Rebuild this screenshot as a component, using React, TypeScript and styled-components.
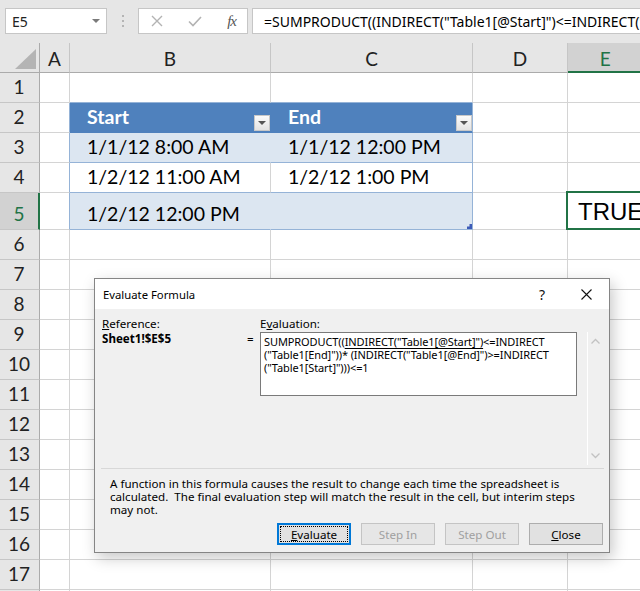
import React from 'react';
import styled, { createGlobalStyle } from 'styled-components';

const GRID = '#d4d4d4';
const TLINE = '#95b3d7';
const BLUE = '#4f81bd';
const BAND = '#dce6f1';
const GREEN = '#217346';

const GlobalStyle = createGlobalStyle`
  html, body {
    margin: 0;
    padding: 0;
    background: #fff;
    overflow: hidden;
  }
`;

const Page = styled.div`
  position: relative;
  width: 640px;
  height: 591px;
  overflow: hidden;
  background: #fff;
`;

/* ---------- formula bar ---------- */

const FormulaBar = styled.div`
  display: flex;
  align-items: flex-start;
  height: 43px;
  box-sizing: border-box;
  padding: 8px 0 0 5px;
  background: #e6e6e6;
  font-family: "Noto Sans", sans-serif;
`;

const Field = styled.div`
  box-sizing: border-box;
  height: 26px;
  background: #fff;
  border: 1px solid #c6c6c6;
  display: flex;
  align-items: center;
`;

const NameBox = styled(Field)`
  width: 102px;
  padding: 0 6px 0 6px;
  justify-content: space-between;
  font-size: 14px;
  color: #222;
`;

const Caret = styled.span`
  width: 0;
  height: 0;
  border-left: 4px solid transparent;
  border-right: 4px solid transparent;
  border-top: 4px solid #7a7a7a;
`;

const Grip = styled.div`
  width: 31px;
  height: 26px;
  display: flex;
  flex-direction: column;
  align-items: center;
  justify-content: center;
  gap: 3px;

  span {
    width: 2px;
    height: 2px;
    background: #b4b4b4;
  }
`;

const FxGroup = styled(Field)`
  width: 110px;
  padding: 0 11px 0 12px;
  justify-content: space-between;
`;

const Fx = styled.span`
  font-family: "Liberation Serif", serif;
  font-style: italic;
  font-size: 15px;
  color: #555;
  letter-spacing: -1px;
`;

const FormulaInput = styled(Field)`
  flex: 1;
  margin-left: 4px;
  margin-right: -2px;
  padding-left: 11px;
  overflow: hidden;
  white-space: nowrap;
  font-size: 14px;
  color: #000;
`;

/* ---------- sheet ---------- */

const Sheet = styled.div`
  display: grid;
  grid-template-columns: 40px 30px 201px 202px 95px 1fr;
  grid-template-rows: 30px 30px 30px 30px 30px 37px;
  grid-auto-rows: 30px;
  font-family: Lato, "Noto Sans", sans-serif;
`;

const Corner = styled.div`
  box-sizing: border-box;
  background: #e6e6e6;
  border-right: 1px solid #ababab;
  border-bottom: 1px solid #ababab;
  display: flex;
  align-items: flex-end;
  justify-content: flex-end;
  padding: 0 3px 3px 0;

  span {
    width: 21px;
    height: 20px;
    background: #b4b4b4;
    clip-path: polygon(100% 0, 100% 100%, 0 100%);
  }
`;

const ColHead = styled.div<{ $active?: boolean }>`
  box-sizing: border-box;
  background: ${p => (p.$active ? '#d2d2d2' : '#e6e6e6')};
  border-right: 1px solid #c6c6c6;
  border-bottom: ${p => (p.$active ? `2px solid ${GREEN}` : '1px solid #ababab')};
  display: flex;
  align-items: center;
  justify-content: center;
  padding-top: ${p => (p.$active ? '2px' : '1px')};
  font-size: 19px;
  color: ${p => (p.$active ? GREEN : '#222')};
`;

const RowHead = styled.div<{ $active?: boolean }>`
  box-sizing: border-box;
  background: ${p => (p.$active ? '#d2d2d2' : '#e6e6e6')};
  border-right: ${p => (p.$active ? `2px solid ${GREEN}` : '1px solid #ababab')};
  border-bottom: 1px solid #c6c6c6;
  display: flex;
  align-items: flex-end;
  justify-content: center;
  padding: 0 ${p => (p.$active ? '0' : '1px')} 5px 0;
  font-size: 19px;
  line-height: 20px;
  color: ${p => (p.$active ? GREEN : '#222')};
`;

const Cell = styled.div<{ $bg?: string; $r?: string; $b?: string; $head?: boolean }>`
  box-sizing: border-box;
  position: relative;
  display: flex;
  align-items: flex-end;
  padding-left: 17px;
  background: ${p => p.$bg ?? '#fff'};
  border-right: 1px solid ${p => p.$r ?? GRID};
  border-bottom: 1px solid ${p => p.$b ?? GRID};
  font-size: 19.5px;
  line-height: 22px;
  font-weight: ${p => (p.$head ? 700 : 400)};
  color: ${p => (p.$head ? '#fff' : '#000')};
  white-space: nowrap;
`;

const Value = styled.span`
  padding-bottom: 4px;
`;

const FilterButton = styled.span`
  box-sizing: border-box;
  width: 16px;
  height: 16px;
  margin-left: auto;
  margin-bottom: 1px;
  background: linear-gradient(#fbfbfb, #e3e3e3);
  border: 1px solid #c8c8c8;
  display: flex;
  align-items: center;
  justify-content: center;

  &::before {
    content: "";
    border-left: 4px solid transparent;
    border-right: 4px solid transparent;
    border-top: 4px solid #555;
  }
`;

const ResizeCell = styled(Cell)`
  &::after {
    content: "";
    position: absolute;
    right: 0;
    bottom: 0;
    width: 5px;
    height: 5px;
    background: #3d5bb8;
    clip-path: polygon(100% 0, 100% 100%, 0 100%, 0 50%, 50% 50%, 50% 0);
  }
`;

const SelectedCell = styled(Cell)`
  padding-left: 10px;
  font-family: "Liberation Sans", Arial, sans-serif;
  font-size: 24px;
  line-height: 26px;
  border-right: none;

  &::after {
    content: "";
    position: absolute;
    left: -2px;
    top: -2px;
    right: -4px;
    bottom: -1px;
    border: 2px solid ${GREEN};
  }
`;

/* ---------- dialog ---------- */

const Dialog = styled.div`
  position: absolute;
  left: 94px;
  top: 278px;
  width: 516px;
  box-sizing: border-box;
  border: 1px solid #858585;
  background: #f0f0f0;
  box-shadow: 3px 5px 14px rgba(0, 0, 0, 0.22);
  font-family: "Noto Sans", sans-serif;
  font-size: 11.6px;
  color: #000;
`;

const TitleBar = styled.div`
  display: flex;
  align-items: center;
  height: 30px;
  background: #fff;
  padding-left: 8px;
  font-size: 11.3px;
`;

const Title = styled.span`
  flex: 1;
`;

const TitleButton = styled.span<{ $w: number }>`
  width: ${p => p.$w}px;
  height: 30px;
  display: flex;
  align-items: center;
  justify-content: center;
  font-size: 14px;
  color: #111;
`;

const Body = styled.div`
  padding: 7px 5px 7px 7px;
`;

const Top = styled.div`
  display: grid;
  grid-template-columns: 144px 14px 317px 15px;
  grid-template-rows: 16px 133px;
  line-height: 14px;

  & > :nth-child(4n) {
    margin-left: 10px;
  }
`;

const Label = styled.div`
  padding-top: 1px;
`;

const Bold = styled.div`
  font-weight: 700;
`;

const Equals = styled.div`
  padding-left: 1px;
`;

const EvalBox = styled.div`
  box-sizing: border-box;
  height: 64px;
  background: #fff;
  border: 1px solid #7a7a7a;
  padding: 2px 3px;
  font-size: 11px;
  letter-spacing: -0.1px;
  line-height: 13px;
  white-space: nowrap;
  overflow: hidden;

  u {
    text-decoration-thickness: 1px;
    text-underline-offset: 2px;
  }
`;

const ScrollTrack = styled.div`
  box-sizing: border-box;
  border-left: 1px solid #fff;
  display: flex;
  flex-direction: column;
  justify-content: space-between;
  align-items: center;
  padding: 6px 0 6px 0;
  width: 16px;
`;

const Separator = styled.div`
  margin: 3px 0 0 -1px;
  border-top: 1px solid #d8d8d8;
`;

const Message = styled.div`
  margin-top: 8px;
  padding-left: 8px;
  line-height: 13px;
`;

const Buttons = styled.div`
  display: flex;
  justify-content: flex-end;
  gap: 10px;
  margin-top: 7px;
  padding-right: 1px;
`;

const Button = styled.button<{ $focused?: boolean }>`
  box-sizing: border-box;
  width: 74px;
  height: 22px;
  margin: 0;
  padding: 0;
  font-family: "Noto Sans", sans-serif;
  font-size: 11.6px;
  color: #000;
  background: #e1e1e1;
  border: ${p => (p.$focused ? '2px solid #0078d7' : '1px solid #adadad')};
  outline: ${p => (p.$focused ? '1px dotted #000' : 'none')};
  outline-offset: ${p => (p.$focused ? '-4px' : '0')};

  &:disabled {
    color: #a0a0a0;
    background: #e6e6e6;
    border-color: #c4c4c4;
  }
`;

const Chevron = ({ up }: { up?: boolean }) => (
  <svg width="9" height="6" viewBox="0 0 9 6">
    <polyline
      points={up ? '0.5,5.5 4.5,1.5 8.5,5.5' : '0.5,0.5 4.5,4.5 8.5,0.5'}
      fill="none"
      stroke="#c2c2c2"
      strokeWidth="1.3"
    />
  </svg>
);

const rows = Array.from({ length: 18 }, (_, i) => i + 1);

function renderRow(r: number) {
  const aRight = r >= 2 && r <= 5 ? TLINE : GRID;
  const a = <Cell $r={aRight} />;
  const d = <Cell />;
  const e = <Cell $r="transparent" />;

  if (r === 1) {
    return [a, <Cell $b={TLINE} />, <Cell $b={TLINE} />, d, e];
  }
  if (r === 2) {
    return [
      a,
      <Cell $head $bg={BLUE} $r={BLUE} $b={BLUE}>
        <Value>Start</Value>
        <FilterButton />
      </Cell>,
      <Cell $head $bg={BLUE} $r={TLINE} $b={BLUE}>
        <Value>End</Value>
        <FilterButton />
      </Cell>,
      d,
      e,
    ];
  }
  if (r === 3) {
    return [
      a,
      <Cell $bg={BAND} $r={BAND} $b={TLINE}><Value>1/1/12 8:00 AM</Value></Cell>,
      <Cell $bg={BAND} $r={TLINE} $b={TLINE}><Value>1/1/12 12:00 PM</Value></Cell>,
      d,
      e,
    ];
  }
  if (r === 4) {
    return [
      a,
      <Cell $b={TLINE}><Value>1/2/12 11:00 AM</Value></Cell>,
      <Cell $r={TLINE} $b={TLINE}><Value>1/2/12 1:00 PM</Value></Cell>,
      d,
      e,
    ];
  }
  if (r === 5) {
    return [
      a,
      <Cell $bg={BAND} $r={BAND} $b={TLINE}><Value>1/2/12 12:00 PM</Value></Cell>,
      <ResizeCell $bg={BAND} $r={TLINE} $b={TLINE} />,
      d,
      <SelectedCell><Value>TRUE</Value></SelectedCell>,
    ];
  }
  return [a, <Cell />, <Cell />, d, e];
}

export default function App() {
  return (
    <Page>
      <GlobalStyle />
      <FormulaBar>
        <NameBox>
          <span>E5</span>
          <Caret />
        </NameBox>
        <Grip>
          <span />
          <span />
          <span />
        </Grip>
        <FxGroup>
          <svg width="12" height="12" viewBox="0 0 12 12">
            <path d="M1 1 L11 11 M11 1 L1 11" stroke="#b3b3b3" strokeWidth="1.4" />
          </svg>
          <svg width="14" height="11" viewBox="0 0 14 11">
            <path d="M1 5.5 L5 9.5 L13 1" fill="none" stroke="#b3b3b3" strokeWidth="1.6" />
          </svg>
          <Fx>fx</Fx>
        </FxGroup>
        <FormulaInput>
          =SUMPRODUCT((INDIRECT("Table1[@Start]")&lt;=INDIRECT("Table1[End]"))*(INDIRECT("Table1[@End]")&gt;=INDIRECT("Table1[Start]")))&lt;=1
        </FormulaInput>
      </FormulaBar>

      <Sheet>
        <Corner>
          <span />
        </Corner>
        <ColHead>A</ColHead>
        <ColHead>B</ColHead>
        <ColHead>C</ColHead>
        <ColHead>D</ColHead>
        <ColHead $active>E</ColHead>
        {rows.map(r => (
          <React.Fragment key={r}>
            <RowHead $active={r === 5}>{r}</RowHead>
            {renderRow(r).map((c, i) => (
              <React.Fragment key={i}>{c}</React.Fragment>
            ))}
          </React.Fragment>
        ))}
      </Sheet>

      <Dialog>
        <TitleBar>
          <Title>Evaluate Formula</Title>
          <TitleButton $w={44}>?</TitleButton>
          <TitleButton $w={45}>
            <svg width="11" height="11" viewBox="0 0 11 11">
              <path d="M0.5 0.5 L10.5 10.5 M10.5 0.5 L0.5 10.5" stroke="#111" strokeWidth="1.1" />
            </svg>
          </TitleButton>
        </TitleBar>
        <Body>
          <Top>
            <Label>
              <u>R</u>eference:
            </Label>
            <div />
            <Label>
              E<u>v</u>aluation:
            </Label>
            <div />
            <Bold>Sheet1!$E$5</Bold>
            <Equals>=</Equals>
            <div>
              <EvalBox>
                SUMPRODUCT((<u>INDIRECT("Table1[@Start]")</u>&lt;=INDIRECT
                <br />
                ("Table1[End]"))* (INDIRECT("Table1[@End]")&gt;=INDIRECT
                <br />
                ("Table1[Start]")))&lt;=1
              </EvalBox>
            </div>
            <ScrollTrack>
              <Chevron up />
              <Chevron />
            </ScrollTrack>
          </Top>
          <Separator />
          <Message>
            A function in this formula causes the result to change each time the spreadsheet is
            <br />
            calculated.&nbsp; The final evaluation step will match the result in the cell, but interim steps
            <br />
            may not.
          </Message>
          <Buttons>
            <Button $focused>
              <u>E</u>valuate
            </Button>
            <Button disabled>Step In</Button>
            <Button disabled>Step Out</Button>
            <Button>
              <u>C</u>lose
            </Button>
          </Buttons>
        </Body>
      </Dialog>
    </Page>
  );
}
